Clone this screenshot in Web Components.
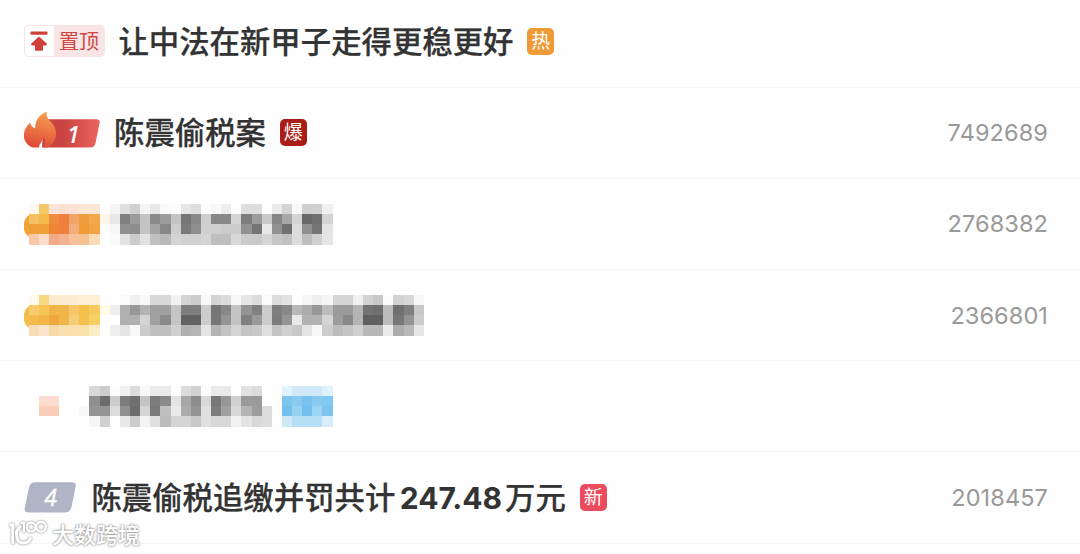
<!DOCTYPE html>
<html lang="zh-CN">
<head>
<meta charset="utf-8">
<title>热搜榜</title>
<style>
    body {
        margin: 0;
        background: #fefefe;
        font-family: Inter, "Noto Sans CJK SC", sans-serif;
        overflow: hidden;
    }
</style>
</head>
<body>
<hot-list>
    <hot-row>
        <top-badge slot="rank">置顶</top-badge>
        <hot-title style="--gap: 13.4px">让中法在新甲子走得更稳更好</hot-title>
        <hot-tag color="#f09a37">热</hot-tag>
    </hot-row>
    <hot-row count="7492689">
        <fire-badge slot="rank">1</fire-badge>
        <hot-title style="--gap: 14px">陈震偷税案</hot-title>
        <hot-tag color="#a91e17">爆</hot-tag>
    </hot-row>
    <hot-row count="2768382">
        <mosaic-strip name="second"></mosaic-strip>
    </hot-row>
    <hot-row count="2366801">
        <mosaic-strip name="third"></mosaic-strip>
    </hot-row>
    <hot-row>
        <mosaic-strip name="promo"></mosaic-strip>
    </hot-row>
    <hot-row count="2018457">
        <rank-badge slot="rank">4</rank-badge>
        <hot-title style="--gap: 14.4px">陈震偷税追缴并罚共计<b>247.48</b>万元</hot-title>
        <hot-tag color="#eb4b5c">新</hot-tag>
    </hot-row>
</hot-list>
<water-mark>大数跨境</water-mark>

<script>
class BaseElement extends HTMLElement {
    constructor(){
        super()
        this.attachShadow({ mode: 'open' })
    }
    connectedCallback(){
        const template = document.createElement('template')
        template.innerHTML = `${this.getStyles()}${this.getTemplate()}`
        this.shadowRoot.replaceChildren(template.content.cloneNode(true))
    }
}

class HotList extends BaseElement {
    getTemplate(){
        return `<slot></slot>`
    }
    getStyles(){
        return `
        <style>
            :host {
                display: grid;
                grid-auto-rows: 91.2px;
                margin-top: -3.5px;
            }
        </style>
        `
    }
}

class HotRow extends BaseElement {
    getTemplate(){
        const count = this.getAttribute('count')
        return `
            <slot name="rank"></slot>
            <slot></slot>
            ${count ? `<span class="count">${count}</span>` : ''}
        `
    }
    getStyles(){
        return `
        <style>
            :host {
                display: flex;
                align-items: center;
                box-sizing: border-box;
                padding: 1px 32px 0 24px;
                border-bottom: 1px solid #f6f6f6;
            }
            .count {
                margin-left: auto;
                color: #999;
                font-size: 23.5px;
                line-height: 30px;
                letter-spacing: .1px;
            }
        </style>
        `
    }
}

class HotTitle extends BaseElement {
    getTemplate(){
        return `<slot></slot>`
    }
    getStyles(){
        return `
        <style>
            :host {
                display: block;
                margin-left: var(--gap);
                margin-top: -1px;
                color: #333;
                font-size: 30.4px;
                font-weight: 500;
                line-height: 40px;
                white-space: nowrap;
                -webkit-text-stroke: .25px #333;
            }
            ::slotted(b) {
                font-size: 30px;
                font-weight: 700;
                margin: 0 3px 0 4.5px;
                -webkit-text-stroke: 0;
            }
        </style>
        `
    }
}

class HotTag extends BaseElement {
    getTemplate(){
        return `<span style="background: ${this.getAttribute('color')}"><slot></slot></span>`
    }
    getStyles(){
        return `
        <style>
            :host {
                display: block;
                margin-left: 13.8px;
                margin-top: -1.4px;
            }
            span {
                display: block;
                width: 27px;
                height: 27px;
                border-radius: 5px;
                color: #fff;
                font-size: 19px;
                line-height: 28px;
                text-align: center;
            }
        </style>
        `
    }
}

class TopBadge extends BaseElement {
    getTemplate(){
        return `
            <svg width="29" height="30" viewBox="0 0 29 30">
                <rect x="5.500" y="5.500" width="17" height="3.200" rx="1" fill="#cf403b"/>
                <path d="M14 10.500 21.700 17.600Q22.500 19.500 20.700 19.500H18V23.500Q18 24.700 17 24.700H11Q10 24.700 10 23.500V19.500H7.300Q5.500 19.500 6.300 17.600Z" fill="#cf403b"/>
            </svg>
            <span><slot></slot></span>
        `
    }
    getStyles(){
        return `
        <style>
            :host {
                display: flex;
                box-sizing: border-box;
                width: 81px;
                height: 32px;
                margin-top: -2.6px;
                border: 1px solid #f8e4e4;
                border-radius: 4px;
                overflow: hidden;
            }
            span {
                flex: 1;
                background: #f9e5e5;
                color: #cf4743;
                font-size: 20px;
                line-height: 32px;
                text-align: center;
            }
        </style>
        `
    }
}

class FireBadge extends BaseElement {
    getTemplate(){
        return `
            <svg width="76" height="38" viewBox="0 0 76 38">
                <defs>
                    <linearGradient id="bar">
                        <stop offset=".35" stop-color="#c94440"/>
                        <stop offset="1" stop-color="#ec625f"/>
                    </linearGradient>
                    <linearGradient id="flame" x1=".6" y1="0" x2=".4" y2="1">
                        <stop offset="0" stop-color="#f3a04f"/>
                        <stop offset=".55" stop-color="#ec7142"/>
                        <stop offset="1" stop-color="#df4a38"/>
                    </linearGradient>
                </defs>
                <path d="M20 8.300H72Q76.700 8.300 75.500 12.500L71.500 32Q70.500 36.500 66 36.500H18Z" fill="url(#bar)"/>
                <path d="M8.500 36.500C3 34-.2 29.500-.2 24.500C-.2 19 3 15 6 11.300C6.200 14 8.500 16.500 11.200 17.500C11 10 14.500 4 22.800.5C22 5 24 8 27.500 11.500C30.500 14.700 32.300 19 32 24C31.600 30 28 34.500 23 36.500H20C21.500 33 21.500 29.500 20.200 26C19.500 29.300 16.500 31.500 15.500 34L15.200 36.500Z" fill="url(#flame)"/>
            </svg>
            <span><slot></slot></span>
        `
    }
    getStyles(){
        return `
        <style>
            :host {
                display: grid;
                width: 76px;
                height: 38px;
                margin-top: -7px;
            }
            svg, span {
                grid-area: 1 / 1;
            }
            span {
                padding: 10px 0 0 43px;
                color: #fff;
                font-family: "Open Sans", sans-serif;
                font-size: 23px;
                font-style: italic;
                font-weight: 600;
                line-height: 27px;
            }
        </style>
        `
    }
}

class RankBadge extends BaseElement {
    getTemplate(){
        return `
            <svg width="53" height="31" viewBox="0 0 53 31">
                <path d="M11 .3H47.500Q52.800.3 51.600 5L47.500 25Q46.200 30.500 40.500 30.500H5Q-.2 30.500.8 25.500L5 5.500Q6.200.3 11 .3Z" fill="#b0b5c5"/>
            </svg>
            <span><slot></slot></span>
        `
    }
    getStyles(){
        return `
        <style>
            :host {
                display: grid;
                width: 53px;
                height: 31px;
                margin-top: -2px;
            }
            svg, span {
                grid-area: 1 / 1;
            }
            span {
                color: #fff;
                font-family: "Open Sans", sans-serif;
                font-size: 23px;
                font-style: italic;
                font-weight: 500;
                line-height: 31px;
                text-align: center;
                -webkit-text-stroke: .4px #fff;
            }
        </style>
        `
    }
}

// two digits are a grey level, six are a full colour, a dot is an empty cell
const strips = {
    second: {
        edge: '#f0a43a',
        rows: [
            'fdf8ee f4c867 fbe3d8 fbdfd2 fce2d6 fce6d5 fce6d5 . f5 df d0 f4 e8 fa fc e6 de . f8 ee . de de . eb d4 f8 d0 d0 f0',
            'f4c165 f3bb4d ee8e3c ee7f3f f3a568 f09d3d f2a84b fff5e8 e8 80 9c c4 8a 9c c4 77 88 cf 88 88 d4 7c 9c c8 86 a8 d4 68 70 d4',
            'f09f38 f0a038 ee8535 ef7f3e f4ae7c f09a38 f3a545 . f6 90 8e c4 a4 88 ce 7a 8e d0 d0 cc cc 90 74 e8 92 70 dc 90 74 e4',
            'f8c8a8 fbdccb f4ab85 f5b08e f8c098 f8c090 fbdab8 . fa e2 cc e2 c0 b8 d4 d0 d0 d4 be be d8 ca ca d6 c6 c0 dc be d0 e6'
        ]
    },
    third: {
        edge: '#f2bd4d',
        rows: [
            'fff9ec f6d983 fbecd0 fbecd0 fbecd0 fcefd2 fcefd2 . . fa f0 f9 d8 d8 f2 d4 cc f9 d4 dc f8 e6 dc fa dc e2 . f5 ee f6 d4 d4 f0 d2 c8 fc d2 d8 f8',
            'f6cc6a f5c455 f0b548 f0b548 f4c86a f3c14a f4cb5c fffbe8 ee b0 98 b4 a0 a0 c4 7e 7e cc 76 88 c4 94 80 cc 7e 88 b8 ac 98 bc 9a 9a b4 74 70 bc 70 80 c8',
            'f2b94d f2b546 efa63e f0b548 f5cc78 f4c24c f6d060 . . b0 b0 d4 a0 8a c4 62 62 cc 76 94 c4 80 9a cc 7c 94 e8 b2 b2 d4 9c 88 b4 60 60 bc 76 94 cc',
            'f9ddb4 fae5cc f7d8a8 f9e0b0 f9e0b0 f9e3a8 fbecc8 . ee e4 f8 cc c0 c0 d0 b0 b4 e4 b4 c4 d4 c4 c8 e0 c4 d0 c8 e4 f8 cc bc c4 d0 b8 b8 ec ac b8 e6'
        ]
    },
    promo: {
        rows: [
            '. . . . . . d8 cc fc f0 dc f8 ea ea . dc d2 fb ea ea . e2 dc . . dff3fd cfe9f9 cfe9f9 cfe9f9 def2fc',
            '. fbdccf fbdccf . . . 90 6c cc 7c 70 c4 7c 8a e4 a8 8e d8 78 98 d0 9a 9a . . 7cc6ee 88caf0 78c2ed 88caf0 80c8f0',
            '. f8ceb8 f8ceb8 . . f8 94 94 dc 90 6c d4 78 c0 ea ac 94 e0 7c a0 d8 b4 9c dc . 74c0ec 98d2f3 74c0ec 9cd5f4 7cc4ee',
            '. . . . . . f6 d0 . e8 cc f4 e0 bc d4 d4 c8 e0 d8 d8 f2 e4 d8 dc . cde9f8 b4dff5 b4dff5 b4dff5 d8eefb'
        ]
    }
}

class MosaicStrip extends BaseElement {
    getTemplate(){
        const { edge, rows } = strips[this.getAttribute('name')]
        const cell = 10.13
        const cells = rows.map((row, y) => row.split(' ').map((value, x) => {
            if(value === '.') return ''
            const fill = value.length === 2 ? value.repeat(3) : value
            return `<rect x="${(4.7 + x * cell).toFixed(2)}" y="${(y * cell).toFixed(2)}" width="${cell}" height="${cell}" fill="#${fill}"/>`
        }).join('')).join('')
        return `
            <svg width="402" height="41" viewBox="0 0 402 41">
                ${edge ? `<path d="M6 10.500Q-.3 14-.3 22Q-.3 30 6 33.500Z" fill="${edge}"/>` : ''}
                <g shape-rendering="crispEdges">${cells}</g>
            </svg>
        `
    }
    getStyles(){
        return `
        <style>
            :host {
                display: block;
                height: 41px;
            }
            svg {
                display: block;
            }
        </style>
        `
    }
}

class WaterMark extends BaseElement {
    getTemplate(){
        return `
            <svg width="42" height="32" viewBox="0 0 42 32" fill="none" stroke="#fff" stroke-width="3">
                <path d="M2.500 8H5.800V27"/>
                <path d="M14 8.500 9.500 14.500V18C10 28 20.500 28.500 24 20.500"/>
                <path d="M14 6H17V15.500" stroke-width="2.400"/>
                <circle cx="24.200" cy="10" r="4.400" stroke-width="2.400"/>
                <circle cx="34" cy="9.800" r="4.800" stroke-width="2.400"/>
            </svg>
            <span><slot></slot></span>
        `
    }
    getStyles(){
        return `
        <style>
            :host {
                position: absolute;
                left: 7px;
                top: 517px;
                display: flex;
                gap: 3px;
            }
            svg {
                filter: drop-shadow(0 0 1.2px #777);
            }
            span {
                color: #fff;
                font-size: 22px;
                font-weight: 500;
                line-height: 36px;
                text-shadow: 0 0 2px #888, 0 0 3px #aaa;
            }
        </style>
        `
    }
}

customElements.define('hot-list', HotList)
customElements.define('hot-row', HotRow)
customElements.define('hot-title', HotTitle)
customElements.define('hot-tag', HotTag)
customElements.define('top-badge', TopBadge)
customElements.define('fire-badge', FireBadge)
customElements.define('rank-badge', RankBadge)
customElements.define('mosaic-strip', MosaicStrip)
customElements.define('water-mark', WaterMark)
</script>
</body>
</html>
